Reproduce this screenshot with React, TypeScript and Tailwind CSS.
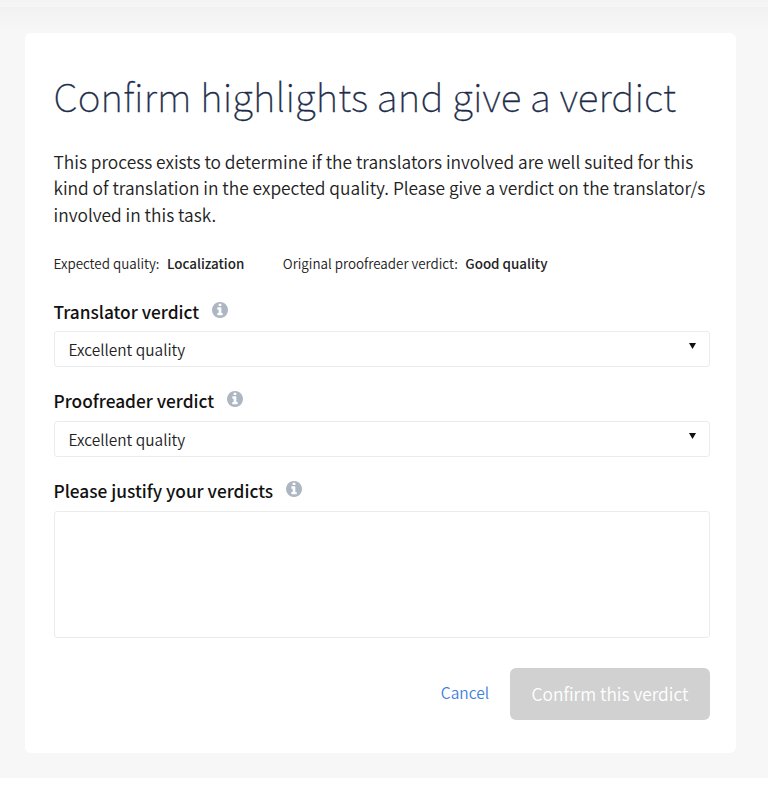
import React, { useState } from "react";

type FieldLabelProps = {
  htmlFor: string;
  children: React.ReactNode;
};

function InfoIcon() {
  return (
    <svg className="mb-1 ml-[13px] h-4 w-4" viewBox="128 128 1536 1536" fill="#adb7c3">
      <path d="M1152 1376v-160q0-14-9-23t-23-9h-96v-512q0-14-9-23t-23-9h-320q-14 0-23 9t-9 23v160q0 14 9 23t23 9h96v320h-96q-14 0-23 9t-9 23v160q0 14 9 23t23 9h448q14 0 23-9t9-23zm-128-896v-160q0-14-9-23t-23-9h-192q-14 0-23 9t-9 23v160q0 14 9 23t23 9h192q14 0 23-9t9-23zm640 416q0 209-103 385.5t-279.5 279.5-385.5 103-385.5-103-279.5-279.5-103-385.5 103-385.5 279.5-279.5 385.5-103 385.5 103 279.5 279.5 103 385.5z" />
    </svg>
  );
}

function FieldLabel({ htmlFor, children }: FieldLabelProps) {
  return (
    <div className="flex h-6 items-center">
      <label htmlFor={htmlFor} className="text-[17.3px] leading-6 font-medium text-[#111]">
        {children}
      </label>
      <InfoIcon />
    </div>
  );
}

function VerdictSelect({ id, value }: { id: string; value: string }) {
  return (
    <button
      id={id}
      type="button"
      className="flex h-9 w-full items-center justify-between rounded-[3px] border border-[#ececec] bg-white pr-[13px] pl-[14px] text-left"
    >
      <span className="text-[15.45px] leading-6 font-[350] text-[#222]">{value}</span>
      {/* caret */}
      <svg className="mb-[7px] h-[6px] w-[7px]" viewBox="0 0 7 6">
        <path d="M0 0h7L3.5 6z" fill="#111" />
      </svg>
    </button>
  );
}

export default function App() {
  const [reason, setReason] = useState("");

  return (
    <div className="h-[794px] bg-white font-['Noto_Sans_CJK_JP','Noto_Sans',sans-serif]">
      <div className="h-[7px] bg-linear-to-b from-[#f3f3f3] to-[#f6f6f6]" />
      <div className="h-[771px] bg-[#f7f7f7] bg-[linear-gradient(to_bottom,#f1f1f1,#f7f7f7_24px)] pt-[26px] pr-8 pl-[25px]">
        <div className="flex h-[720px] flex-col rounded-md bg-white pt-[37px] pr-[26px] pl-[28.5px]">
          <h1 className="text-[38.8px] leading-[50px] font-thin tracking-[0.13px] whitespace-nowrap text-[#1b2b48] [-webkit-text-stroke:0.35px_#1b2b48]">
            Confirm highlights and give a verdict
          </h1>

          <p className="mt-[29px] text-[17.35px] leading-[26.4px] font-[350] whitespace-nowrap text-[#222]">
            This process exists to determine if the translators involved are well suited for this
            <br />
            kind of translation in the expected quality. Please give a verdict on the translator/s
            <br />
            involved in this task.
          </p>

          <div className="mt-[25px] flex gap-[38.5px] text-[13.4px] leading-5 font-[350] whitespace-nowrap text-[#222]">
            <div className="flex gap-[7.5px]">
              <span>Expected quality:</span>
              <span className="font-medium">Localization</span>
            </div>
            <div className="flex gap-[7.5px]">
              <span>Original proofreader verdict:</span>
              <span className="font-medium">Good quality</span>
            </div>
          </div>

          <div className="mt-[27px]">
            <FieldLabel htmlFor="translator">Translator verdict</FieldLabel>
            <div className="mt-[7px]">
              <VerdictSelect id="translator" value="Excellent quality" />
            </div>
          </div>

          <div className="mt-[22px]">
            <FieldLabel htmlFor="proofreader">Proofreader verdict</FieldLabel>
            <div className="mt-2">
              <VerdictSelect id="proofreader" value="Excellent quality" />
            </div>
          </div>

          <div className="mt-[22px]">
            <FieldLabel htmlFor="reason">Please justify your verdicts</FieldLabel>
            <textarea
              id="reason"
              value={reason}
              onChange={(e) => setReason(e.target.value)}
              className="mt-2 block h-[127px] w-full resize-none rounded-[3px] border border-[#ececec] p-3 text-base"
            />
          </div>

          <div className="mt-[30px] flex items-center justify-end gap-[21px]">
            <button type="button" className="mb-1 text-[15.5px] leading-6 font-[350] text-[#3f7fe0]">
              Cancel
            </button>
            <button
              type="button"
              disabled
              className="h-[52px] w-[200px] rounded-md bg-[#d1d1d1] text-[17.35px] font-[350] whitespace-nowrap text-white"
            >
              Confirm this verdict
            </button>
          </div>
        </div>
      </div>
    </div>
  );
}
